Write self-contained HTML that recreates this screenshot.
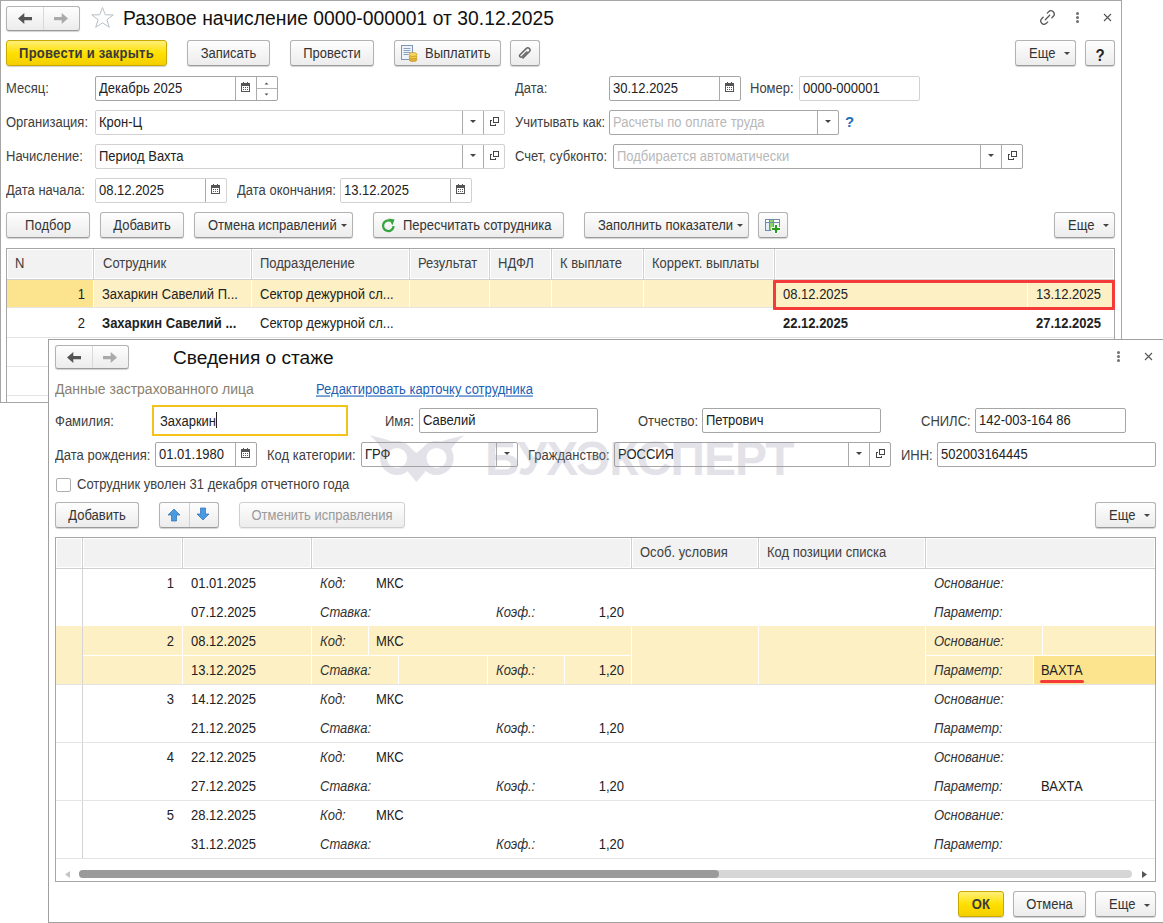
<!DOCTYPE html><html><head><meta charset="utf-8"><style>
*{margin:0;padding:0;box-sizing:border-box}
html,body{width:1163px;height:923px;overflow:hidden;background:#fff;font-family:"Liberation Sans",sans-serif;font-size:13px;color:#404040}
div,span,svg{position:absolute}
.t{white-space:nowrap;line-height:16px;transform:scaleY(1.1);margin-top:1px}
.btn span,.ybtn span{transform:scaleY(1.1)}
.btn,.ybtn{border:1px solid #b3b3b3;border-bottom-color:#9a9a9a;border-radius:3px;background:linear-gradient(#fefefe,#ececec);box-shadow:0 1px 1px rgba(0,0,0,.18);display:flex;align-items:center;justify-content:center;color:#333}
.btn span,.ybtn span{position:static;white-space:nowrap}
.ybtn{background:linear-gradient(#fff07a,#ffe000 50%,#f3cf00);border-color:#c9a800;color:#3a3a3a;font-weight:bold;letter-spacing:.25px}
.fld{border:1px solid #a6a6a6;border-radius:2px;background:#fff}
.ph{color:#b8b8b8}
.hdr{background:#f2f2f2}
</style></head><body><div class="" style="left:0px;top:0px;width:1122px;height:403px;border:1px solid #a6a6a6;background:#fff"></div>
<div class="btn" style="left:6px;top:6px;width:74px;height:25px;"></div>
<div class="" style="left:43px;top:7px;width:1px;height:23px;background:#d9d9d9"></div>
<svg style="left:18px;top:13px" width="14" height="11" viewBox="0 0 14 11"><path d="M0 5.5 L6.3 0 V4 H14 V7.2 H6.3 V11 Z" fill="#555"/></svg>
<svg style="left:54px;top:13px" width="14" height="11" viewBox="0 0 14 11"><path d="M14 5.5 L7.7 0 V4 H0 V7.2 H7.7 V11 Z" fill="#aaa"/></svg>
<svg style="left:90px;top:6px" width="25" height="23" viewBox="0 0 25 23"><path d="M12.5 1.5 L15.3 8.8 L23.2 8.9 L16.9 13.7 L19.3 21.3 L12.5 16.8 L5.7 21.3 L8.1 13.7 L1.8 8.9 L9.7 8.8 Z" fill="none" stroke="#b8bfc6" stroke-width="1"/></svg>
<div class="t" style="left:123px;top:8px;font-size:19.3px;line-height:20px;color:#111;transform:none;letter-spacing:.03px">Разовое начисление 0000-000001 от 30.12.2025</div>
<svg style="left:1040px;top:10px" width="15" height="15" viewBox="0 0 15 15"><g fill="none" stroke="#555" stroke-width="1.3" stroke-linecap="round"><path d="M3.1 7.3 L1.67 8.67 A3.3 3.3 0 0 0 6.33 13.33 L7.7 11.9"/><path d="M11.9 7.7 L13.33 6.33 A3.3 3.3 0 0 0 8.67 1.67 L7.3 3.1"/><path d="M5.3 9.7 L9.7 5.3"/></g></svg>
<div class="" style="left:1076px;top:12px;width:3px;height:3px;background:#707070;border-radius:50%"></div>
<div class="" style="left:1076px;top:16px;width:3px;height:3px;background:#707070;border-radius:50%"></div>
<div class="" style="left:1076px;top:20px;width:3px;height:3px;background:#707070;border-radius:50%"></div>
<svg style="left:1103px;top:13px" width="9" height="9" viewBox="0 0 9 9"><path d="M1 1 L8 8 M8 1 L1 8" stroke="#555" stroke-width="1.1"/></svg>
<div class="ybtn" style="left:6px;top:40px;width:161px;height:26px;"><span>Провести и закрыть</span></div>
<div class="btn" style="left:187px;top:40px;width:83px;height:26px;"><span>Записать</span></div>
<div class="btn" style="left:290px;top:40px;width:84px;height:26px;"><span>Провести</span></div>
<div class="btn" style="left:394px;top:40px;width:107px;height:26px;justify-content:flex-start;padding-left:30px"><span>Выплатить</span></div>
<svg style="left:401px;top:45px" width="17" height="17" viewBox="0 0 17 17"><rect x="0.5" y="0.5" width="11" height="14" fill="#eef3fa" stroke="#7d96b8"/><path d="M2.5 3.5h7M2.5 5.5h7M2.5 7.5h7M2.5 9.5h5" stroke="#8aa0c0"/><ellipse cx="12" cy="14.5" rx="4" ry="2" fill="#e3b53a" stroke="#b88a10" stroke-width=".6"/><ellipse cx="12" cy="12" rx="4" ry="2" fill="#f1c84a" stroke="#b88a10" stroke-width=".6"/><ellipse cx="12" cy="9.5" rx="4" ry="2" fill="#f7d763" stroke="#b88a10" stroke-width=".6"/></svg>
<div class="btn" style="left:510px;top:40px;width:30px;height:26px;"><span></span></div>
<svg style="left:518px;top:46px" width="14" height="14" viewBox="0 0 14 14"><path d="M4.5 12.5 L11.5 5.5 a2.2 2.2 0 0 0 -3.1 -3.1 L2 8.8 a1.4 1.4 0 0 0 2 2 L9.3 5.5" fill="none" stroke="#666" stroke-width="1.5"/></svg>
<div class="btn" style="left:1015px;top:40px;width:61px;height:26px;justify-content:flex-start;padding-left:13px"><span>Еще</span></div>
<svg style="left:1064px;top:52px" width="6" height="4" viewBox="0 0 6 4"><path d="M0 0H6L3 3Z" fill="#444"/></svg>
<div class="btn" style="left:1085px;top:40px;width:30px;height:26px;font-weight:bold;font-size:15px;color:#222;padding-top:2px"><span>?</span></div>
<div class="t" style="left:6px;top:80px;">Месяц:</div>
<div class="fld" style="left:95px;top:76px;width:183px;height:25px;"></div>
<svg style="left:264px;top:82px" width="5" height="3" viewBox="0 0 5 3"><path d="M0.5 2.5H4.5L2.5 0.5Z" fill="#555"/></svg>
<svg style="left:264px;top:93px" width="5" height="3" viewBox="0 0 5 3"><path d="M0.5 0.5H4.5L2.5 2.5Z" fill="#555"/></svg>
<div class="" style="left:256px;top:88px;width:21px;height:1px;background:#b4b4b4"></div>
<div class="" style="left:256px;top:77px;width:1px;height:23px;background:#aaaaaa"></div>
<svg style="left:241px;top:82px" width="9" height="10" viewBox="0 0 9 10" shape-rendering="crispEdges"><g fill="#555"><rect x="0" y="1" width="9" height="3"/><rect x="0" y="1" width="1" height="9"/><rect x="8" y="1" width="1" height="9"/><rect x="0" y="9" width="9" height="1"/><rect x="2" y="0" width="1" height="1"/><rect x="6" y="0" width="1" height="1"/><rect x="2" y="5" width="1" height="1"/><rect x="4" y="5" width="1" height="1"/><rect x="6" y="5" width="1" height="1"/><rect x="2" y="7" width="1" height="1"/><rect x="4" y="7" width="1" height="1"/><rect x="6" y="7" width="1" height="1"/></g></svg>
<div class="" style="left:235px;top:77px;width:1px;height:23px;background:#aaaaaa"></div>
<div class="t" style="left:99px;top:80px;color:#222;">Декабрь 2025</div>
<div class="t" style="left:515px;top:80px;">Дата:</div>
<div class="fld" style="left:609px;top:76px;width:132px;height:25px;"></div>
<svg style="left:725px;top:82px" width="9" height="10" viewBox="0 0 9 10" shape-rendering="crispEdges"><g fill="#555"><rect x="0" y="1" width="9" height="3"/><rect x="0" y="1" width="1" height="9"/><rect x="8" y="1" width="1" height="9"/><rect x="0" y="9" width="9" height="1"/><rect x="2" y="0" width="1" height="1"/><rect x="6" y="0" width="1" height="1"/><rect x="2" y="5" width="1" height="1"/><rect x="4" y="5" width="1" height="1"/><rect x="6" y="5" width="1" height="1"/><rect x="2" y="7" width="1" height="1"/><rect x="4" y="7" width="1" height="1"/><rect x="6" y="7" width="1" height="1"/></g></svg>
<div class="" style="left:719px;top:77px;width:1px;height:23px;background:#aaaaaa"></div>
<div class="t" style="left:613px;top:80px;color:#222;">30.12.2025</div>
<div class="t" style="left:750px;top:80px;">Номер:</div>
<div class="fld" style="left:799px;top:76px;width:121px;height:25px;border-color:#d2d2d2"></div>
<div class="t" style="left:803px;top:80px;color:#222;">0000-000001</div>
<div class="t" style="left:6px;top:114px;">Организация:</div>
<div class="fld" style="left:95px;top:110px;width:410px;height:25px;border-color:#d2d2d2"></div>
<svg style="left:490px;top:117px" width="10" height="10" viewBox="0 0 10 10" shape-rendering="crispEdges"><g fill="#444"><rect x="3" y="0" width="6" height="1"/><rect x="3" y="5" width="6" height="1"/><rect x="3" y="0" width="1" height="6"/><rect x="8" y="0" width="1" height="6"/><rect x="0" y="3" width="1" height="6"/><rect x="0" y="8" width="6" height="1"/><rect x="5" y="7" width="1" height="1"/><rect x="0" y="3" width="2" height="1"/></g></svg>
<div class="" style="left:483px;top:111px;width:1px;height:23px;background:#aaaaaa"></div>
<svg style="left:470px;top:120px" width="6" height="4" viewBox="0 0 6 4"><path d="M0 0H6L3 3Z" fill="#444"/></svg>
<div class="" style="left:462px;top:111px;width:1px;height:23px;background:#aaaaaa"></div>
<div class="t" style="left:99px;top:114px;color:#222;">Крон-Ц</div>
<div class="t" style="left:515px;top:114px;">Учитывать как:</div>
<div class="fld" style="left:609px;top:110px;width:230px;height:25px;"></div>
<svg style="left:825px;top:120px" width="6" height="4" viewBox="0 0 6 4"><path d="M0 0H6L3 3Z" fill="#444"/></svg>
<div class="" style="left:817px;top:111px;width:1px;height:23px;background:#aaaaaa"></div>
<div class="t ph" style="left:613px;top:114px;">Расчеты по оплате труда</div>
<div class="t" style="left:845px;top:113px;color:#1e70b8;font-size:15px;font-weight:bold;transform:none">?</div>
<div class="t" style="left:6px;top:148px;">Начисление:</div>
<div class="fld" style="left:95px;top:144px;width:410px;height:25px;border-color:#d2d2d2"></div>
<svg style="left:490px;top:151px" width="10" height="10" viewBox="0 0 10 10" shape-rendering="crispEdges"><g fill="#444"><rect x="3" y="0" width="6" height="1"/><rect x="3" y="5" width="6" height="1"/><rect x="3" y="0" width="1" height="6"/><rect x="8" y="0" width="1" height="6"/><rect x="0" y="3" width="1" height="6"/><rect x="0" y="8" width="6" height="1"/><rect x="5" y="7" width="1" height="1"/><rect x="0" y="3" width="2" height="1"/></g></svg>
<div class="" style="left:483px;top:145px;width:1px;height:23px;background:#aaaaaa"></div>
<svg style="left:470px;top:154px" width="6" height="4" viewBox="0 0 6 4"><path d="M0 0H6L3 3Z" fill="#444"/></svg>
<div class="" style="left:462px;top:145px;width:1px;height:23px;background:#aaaaaa"></div>
<div class="t" style="left:99px;top:148px;color:#222;">Период Вахта</div>
<div class="t" style="left:515px;top:148px;">Счет, субконто:</div>
<div class="fld" style="left:613px;top:144px;width:410px;height:25px;"></div>
<svg style="left:1008px;top:151px" width="10" height="10" viewBox="0 0 10 10" shape-rendering="crispEdges"><g fill="#444"><rect x="3" y="0" width="6" height="1"/><rect x="3" y="5" width="6" height="1"/><rect x="3" y="0" width="1" height="6"/><rect x="8" y="0" width="1" height="6"/><rect x="0" y="3" width="1" height="6"/><rect x="0" y="8" width="6" height="1"/><rect x="5" y="7" width="1" height="1"/><rect x="0" y="3" width="2" height="1"/></g></svg>
<div class="" style="left:1001px;top:145px;width:1px;height:23px;background:#aaaaaa"></div>
<svg style="left:988px;top:154px" width="6" height="4" viewBox="0 0 6 4"><path d="M0 0H6L3 3Z" fill="#444"/></svg>
<div class="" style="left:980px;top:145px;width:1px;height:23px;background:#aaaaaa"></div>
<div class="t ph" style="left:617px;top:148px;">Подбирается автоматически</div>
<div class="t" style="left:6px;top:182px;">Дата начала:</div>
<div class="fld" style="left:95px;top:178px;width:132px;height:25px;border-color:#d2d2d2"></div>
<svg style="left:211px;top:184px" width="9" height="10" viewBox="0 0 9 10" shape-rendering="crispEdges"><g fill="#555"><rect x="0" y="1" width="9" height="3"/><rect x="0" y="1" width="1" height="9"/><rect x="8" y="1" width="1" height="9"/><rect x="0" y="9" width="9" height="1"/><rect x="2" y="0" width="1" height="1"/><rect x="6" y="0" width="1" height="1"/><rect x="2" y="5" width="1" height="1"/><rect x="4" y="5" width="1" height="1"/><rect x="6" y="5" width="1" height="1"/><rect x="2" y="7" width="1" height="1"/><rect x="4" y="7" width="1" height="1"/><rect x="6" y="7" width="1" height="1"/></g></svg>
<div class="" style="left:205px;top:179px;width:1px;height:23px;background:#aaaaaa"></div>
<div class="t" style="left:99px;top:182px;color:#222;">08.12.2025</div>
<div class="t" style="left:237px;top:182px;">Дата окончания:</div>
<div class="fld" style="left:340px;top:178px;width:132px;height:25px;border-color:#d2d2d2"></div>
<svg style="left:456px;top:184px" width="9" height="10" viewBox="0 0 9 10" shape-rendering="crispEdges"><g fill="#555"><rect x="0" y="1" width="9" height="3"/><rect x="0" y="1" width="1" height="9"/><rect x="8" y="1" width="1" height="9"/><rect x="0" y="9" width="9" height="1"/><rect x="2" y="0" width="1" height="1"/><rect x="6" y="0" width="1" height="1"/><rect x="2" y="5" width="1" height="1"/><rect x="4" y="5" width="1" height="1"/><rect x="6" y="5" width="1" height="1"/><rect x="2" y="7" width="1" height="1"/><rect x="4" y="7" width="1" height="1"/><rect x="6" y="7" width="1" height="1"/></g></svg>
<div class="" style="left:450px;top:179px;width:1px;height:23px;background:#aaaaaa"></div>
<div class="t" style="left:344px;top:182px;color:#222;">13.12.2025</div>
<div class="btn" style="left:6px;top:212px;width:84px;height:26px;"><span>Подбор</span></div>
<div class="btn" style="left:100px;top:212px;width:84px;height:26px;"><span>Добавить</span></div>
<div class="btn" style="left:194px;top:212px;width:159px;height:26px;justify-content:flex-start;padding-left:13px"><span>Отмена исправлений</span></div>
<svg style="left:341px;top:224px" width="6" height="4" viewBox="0 0 6 4"><path d="M0 0H6L3 3Z" fill="#444"/></svg>
<div class="btn" style="left:373px;top:212px;width:191px;height:26px;justify-content:flex-start;padding-left:29px"><span>Пересчитать сотрудника</span></div>
<svg style="left:381px;top:218px" width="15" height="15" viewBox="0 0 15 15"><path d="M12.6 8.2 A5.3 5.3 0 1 1 9.6 3" fill="none" stroke="#37a53f" stroke-width="2.3"/><path d="M7.6 0.6 L13.6 1.6 L11.4 7.2 Z" fill="#37a53f"/></svg>
<div class="btn" style="left:584px;top:212px;width:165px;height:26px;justify-content:flex-start;padding-left:13px"><span>Заполнить показатели</span></div>
<svg style="left:737px;top:224px" width="6" height="4" viewBox="0 0 6 4"><path d="M0 0H6L3 3Z" fill="#444"/></svg>
<div class="btn" style="left:758px;top:212px;width:30px;height:26px;"><span></span></div>
<svg style="left:765px;top:219px" width="18" height="15" viewBox="0 0 18 15" shape-rendering="crispEdges"><rect x="0" y="0" width="15" height="12" fill="#6f8da8"/><rect x="1" y="1" width="3" height="2" fill="#fff"/><rect x="5" y="1" width="3" height="2" fill="#8bd36a"/><rect x="9" y="1" width="5" height="2" fill="#fff"/><rect x="1" y="4" width="3" height="7" fill="#e3edf7"/><rect x="5" y="4" width="3" height="7" fill="#8bd36a"/><rect x="9" y="4" width="5" height="7" fill="#eef4fa"/><path d="M9.5 5.5h3v3h3v3h-3v3h-3v-3h-3v-3h3z" fill="#2a9a1c" stroke="#fff" stroke-width="1" shape-rendering="geometricPrecision"/></svg>
<div class="btn" style="left:1054px;top:212px;width:61px;height:26px;justify-content:flex-start;padding-left:13px"><span>Еще</span></div>
<svg style="left:1103px;top:224px" width="6" height="4" viewBox="0 0 6 4"><path d="M0 0H6L3 3Z" fill="#444"/></svg>
<div class="" style="left:6px;top:248px;width:1109px;height:155px;border:1px solid #a6a6a6;border-bottom:none;background:#fff"></div>
<div class="hdr" style="left:8px;top:250px;width:84px;height:28px;"></div>
<div class="hdr" style="left:95px;top:250px;width:155px;height:28px;"></div>
<div class="hdr" style="left:253px;top:250px;width:155px;height:28px;"></div>
<div class="hdr" style="left:411px;top:250px;width:77px;height:28px;"></div>
<div class="hdr" style="left:491px;top:250px;width:59px;height:28px;"></div>
<div class="hdr" style="left:553px;top:250px;width:89px;height:28px;"></div>
<div class="hdr" style="left:645px;top:250px;width:128px;height:28px;"></div>
<div class="hdr" style="left:776px;top:250px;width:337px;height:28px;"></div>
<div class="" style="left:93px;top:249px;width:1px;height:30px;background:#d0d0d0"></div>
<div class="" style="left:251px;top:249px;width:1px;height:30px;background:#d0d0d0"></div>
<div class="" style="left:409px;top:249px;width:1px;height:30px;background:#d0d0d0"></div>
<div class="" style="left:489px;top:249px;width:1px;height:30px;background:#d0d0d0"></div>
<div class="" style="left:551px;top:249px;width:1px;height:30px;background:#d0d0d0"></div>
<div class="" style="left:643px;top:249px;width:1px;height:30px;background:#d0d0d0"></div>
<div class="" style="left:774px;top:249px;width:1px;height:30px;background:#d0d0d0"></div>
<div class="" style="left:7px;top:279px;width:1107px;height:1px;background:#d0d0d0"></div>
<div class="t" style="left:15px;top:255px;">N</div>
<div class="t" style="left:103px;top:255px;">Сотрудник</div>
<div class="t" style="left:260px;top:255px;">Подразделение</div>
<div class="t" style="left:418px;top:255px;">Результат</div>
<div class="t" style="left:498px;top:255px;">НДФЛ</div>
<div class="t" style="left:560px;top:255px;">К выплате</div>
<div class="t" style="left:652px;top:255px;">Коррект. выплаты</div>
<div class="" style="left:7px;top:280px;width:1107px;height:27px;background:#fdf0c4"></div>
<div class="" style="left:7px;top:280px;width:86px;height:27px;background:#fce38e"></div>
<div class="" style="left:93px;top:280px;width:1px;height:27px;background:#fff"></div>
<div class="" style="left:251px;top:280px;width:1px;height:27px;background:#fff"></div>
<div class="" style="left:409px;top:280px;width:1px;height:27px;background:#fff"></div>
<div class="" style="left:489px;top:280px;width:1px;height:27px;background:#fff"></div>
<div class="" style="left:551px;top:280px;width:1px;height:27px;background:#fff"></div>
<div class="" style="left:643px;top:280px;width:1px;height:27px;background:#fff"></div>
<div class="" style="left:774px;top:280px;width:1px;height:27px;background:#fff"></div>
<div class="" style="left:1027px;top:280px;width:1px;height:27px;background:#fff"></div>
<div class="" style="left:7px;top:307px;width:1107px;height:1px;background:#e4e4e4"></div>
<div class="t" style="right:1078px;top:286px;color:#222">1</div>
<div class="t" style="left:102px;top:286px;color:#222">Захаркин Савелий П...</div>
<div class="t" style="left:260px;top:286px;color:#222">Сектор дежурной сл...</div>
<div class="t" style="left:783px;top:286px;color:#222">08.12.2025</div>
<div class="t" style="right:62px;top:286px;color:#222">13.12.2025</div>
<div class="" style="left:773px;top:280px;width:342px;height:30px;border:3px solid #f53a3a;border-radius:1px"></div>
<div class="t" style="right:1078px;top:315px;color:#222">2</div>
<div class="t" style="left:102px;top:315px;color:#222;font-weight:bold">Захаркин Савелий ...</div>
<div class="t" style="left:260px;top:315px;color:#222">Сектор дежурной сл...</div>
<div class="t" style="left:783px;top:315px;color:#222;font-weight:bold">22.12.2025</div>
<div class="t" style="right:62px;top:315px;color:#222;font-weight:bold">27.12.2025</div>
<div class="" style="left:7px;top:337px;width:1107px;height:1px;background:#e4e4e4"></div>
<div class="" style="left:7px;top:366px;width:1107px;height:1px;background:#e4e4e4"></div>
<div class="" style="left:7px;top:395px;width:1107px;height:1px;background:#e4e4e4"></div>
<div class="" style="left:0px;top:402px;width:1122px;height:1px;background:#a6a6a6"></div>
<div class="" style="left:48px;top:339px;width:1120px;height:584px;border:1px solid #a0a0a0;border-right:none;background:#fff"></div>
<div class="btn" style="left:55px;top:345px;width:74px;height:24px;"></div>
<div class="" style="left:92px;top:346px;width:1px;height:22px;background:#d9d9d9"></div>
<svg style="left:67px;top:352px" width="14" height="11" viewBox="0 0 14 11"><path d="M0 5.5 L6.3 0 V4 H14 V7.2 H6.3 V11 Z" fill="#555"/></svg>
<svg style="left:103px;top:352px" width="14" height="11" viewBox="0 0 14 11"><path d="M14 5.5 L7.7 0 V4 H0 V7.2 H7.7 V11 Z" fill="#aaa"/></svg>
<div class="t" style="left:173px;top:347px;font-size:19.1px;line-height:20px;color:#111;transform:none">Сведения о стаже</div>
<div class="" style="left:1117px;top:351px;width:3px;height:3px;background:#707070;border-radius:50%"></div>
<div class="" style="left:1117px;top:355px;width:3px;height:3px;background:#707070;border-radius:50%"></div>
<div class="" style="left:1117px;top:359px;width:3px;height:3px;background:#707070;border-radius:50%"></div>
<svg style="left:1144px;top:352px" width="9" height="9" viewBox="0 0 9 9"><path d="M1 1 L8 8 M8 1 L1 8" stroke="#555" stroke-width="1.1"/></svg>
<div class="t" style="left:55px;top:379px;color:#8b7f6e;font-size:14px">Данные застрахованного лица</div>
<div class="t" style="left:316px;top:381px;color:#1b5fb5;text-decoration:underline">Редактировать карточку сотрудника</div>
<div class="t" style="left:55px;top:413px;">Фамилия:</div>
<div class="" style="left:152px;top:405px;width:196px;height:31px;border:2px solid #f3c31b;background:#fff"></div>
<div class="t" style="left:160px;top:413px;color:#222">Захаркин</div>
<div class="" style="left:216px;top:412px;width:1px;height:16px;background:#222"></div>
<div class="t" style="left:385px;top:413px;">Имя:</div>
<div class="fld" style="left:419px;top:408px;width:179px;height:25px;"></div>
<div class="t" style="left:423px;top:412px;color:#222;">Савелий</div>
<div class="t" style="left:638px;top:413px;">Отчество:</div>
<div class="fld" style="left:702px;top:408px;width:179px;height:25px;"></div>
<div class="t" style="left:706px;top:412px;color:#222;">Петрович</div>
<div class="t" style="left:921px;top:413px;">СНИЛС:</div>
<div class="fld" style="left:975px;top:408px;width:151px;height:25px;"></div>
<div class="t" style="left:979px;top:412px;color:#222;">142-003-164 86</div>
<div class="t" style="left:55px;top:447px;">Дата рождения:</div>
<div class="fld" style="left:155px;top:442px;width:102px;height:25px;"></div>
<svg style="left:241px;top:448px" width="9" height="10" viewBox="0 0 9 10" shape-rendering="crispEdges"><g fill="#555"><rect x="0" y="1" width="9" height="3"/><rect x="0" y="1" width="1" height="9"/><rect x="8" y="1" width="1" height="9"/><rect x="0" y="9" width="9" height="1"/><rect x="2" y="0" width="1" height="1"/><rect x="6" y="0" width="1" height="1"/><rect x="2" y="5" width="1" height="1"/><rect x="4" y="5" width="1" height="1"/><rect x="6" y="5" width="1" height="1"/><rect x="2" y="7" width="1" height="1"/><rect x="4" y="7" width="1" height="1"/><rect x="6" y="7" width="1" height="1"/></g></svg>
<div class="" style="left:235px;top:443px;width:1px;height:23px;background:#aaaaaa"></div>
<div class="t" style="left:159px;top:446px;color:#222;">01.01.1980</div>
<div class="t" style="left:267px;top:447px;">Код категории:</div>
<div class="fld" style="left:361px;top:442px;width:157px;height:25px;"></div>
<svg style="left:504px;top:452px" width="6" height="4" viewBox="0 0 6 4"><path d="M0 0H6L3 3Z" fill="#444"/></svg>
<div class="" style="left:496px;top:443px;width:1px;height:23px;background:#aaaaaa"></div>
<div class="t" style="left:365px;top:446px;color:#222;">ГРФ</div>
<div class="t" style="left:528px;top:447px;">Гражданство:</div>
<div class="fld" style="left:614px;top:442px;width:277px;height:25px;"></div>
<svg style="left:876px;top:449px" width="10" height="10" viewBox="0 0 10 10" shape-rendering="crispEdges"><g fill="#444"><rect x="3" y="0" width="6" height="1"/><rect x="3" y="5" width="6" height="1"/><rect x="3" y="0" width="1" height="6"/><rect x="8" y="0" width="1" height="6"/><rect x="0" y="3" width="1" height="6"/><rect x="0" y="8" width="6" height="1"/><rect x="5" y="7" width="1" height="1"/><rect x="0" y="3" width="2" height="1"/></g></svg>
<div class="" style="left:869px;top:443px;width:1px;height:23px;background:#aaaaaa"></div>
<svg style="left:856px;top:452px" width="6" height="4" viewBox="0 0 6 4"><path d="M0 0H6L3 3Z" fill="#444"/></svg>
<div class="" style="left:848px;top:443px;width:1px;height:23px;background:#aaaaaa"></div>
<div class="t" style="left:618px;top:446px;color:#222;">РОССИЯ</div>
<div class="t" style="left:901px;top:447px;">ИНН:</div>
<div class="fld" style="left:937px;top:442px;width:219px;height:25px;"></div>
<div class="t" style="left:941px;top:446px;color:#222;">502003164445</div>
<div class="" style="left:56px;top:478px;width:15px;height:14px;border:1px solid #b0b0b0;border-radius:2px;background:#fff"></div>
<div class="t" style="left:77px;top:476px;">Сотрудник уволен 31 декабря отчетного года</div>
<div class="btn" style="left:55px;top:502px;width:84px;height:26px;"><span>Добавить</span></div>
<div class="btn" style="left:159px;top:502px;width:60px;height:26px;"><span></span></div>
<div class="" style="left:189px;top:503px;width:1px;height:24px;background:#d0d0d0"></div>
<svg style="left:167px;top:508px" width="14" height="14" viewBox="0 0 14 14"><path d="M7 1 L13 7 H9.5 V13 H4.5 V7 H1 Z" fill="#4a9ae0" stroke="#2a6fb5" stroke-width=".7"/></svg>
<svg style="left:196px;top:507px" width="14" height="14" viewBox="0 0 14 14"><path d="M7 13 L13 7 H9.5 V1 H4.5 V7 H1 Z" fill="#4a9ae0" stroke="#2a6fb5" stroke-width=".7"/></svg>
<div class="btn" style="left:239px;top:502px;width:166px;height:26px;color:#9a9a9a;box-shadow:0 1px 1px rgba(0,0,0,.08);border-color:#cfcfcf"><span>Отменить исправления</span></div>
<div class="btn" style="left:1095px;top:502px;width:61px;height:26px;justify-content:flex-start;padding-left:13px"><span>Еще</span></div>
<svg style="left:1144px;top:514px" width="6" height="4" viewBox="0 0 6 4"><path d="M0 0H6L3 3Z" fill="#444"/></svg>
<div class="" style="left:55px;top:537px;width:1101px;height:345px;border:1px solid #a6a6a6;background:#fff"></div>
<div class="hdr" style="left:57px;top:539px;width:24px;height:28px;"></div>
<div class="hdr" style="left:84px;top:539px;width:97px;height:28px;"></div>
<div class="hdr" style="left:184px;top:539px;width:126px;height:28px;"></div>
<div class="hdr" style="left:313px;top:539px;width:317px;height:28px;"></div>
<div class="hdr" style="left:633px;top:539px;width:124px;height:28px;"></div>
<div class="hdr" style="left:760px;top:539px;width:164px;height:28px;"></div>
<div class="hdr" style="left:927px;top:539px;width:227px;height:28px;"></div>
<div class="" style="left:82px;top:538px;width:1px;height:30px;background:#d0d0d0"></div>
<div class="" style="left:182px;top:538px;width:1px;height:30px;background:#d0d0d0"></div>
<div class="" style="left:311px;top:538px;width:1px;height:30px;background:#d0d0d0"></div>
<div class="" style="left:631px;top:538px;width:1px;height:30px;background:#d0d0d0"></div>
<div class="" style="left:758px;top:538px;width:1px;height:30px;background:#d0d0d0"></div>
<div class="" style="left:925px;top:538px;width:1px;height:30px;background:#d0d0d0"></div>
<div class="" style="left:56px;top:568px;width:1099px;height:1px;background:#d0d0d0"></div>
<div class="t" style="left:640px;top:544px;">Особ. условия</div>
<div class="t" style="left:767px;top:544px;">Код позиции списка</div>
<div class="" style="left:82px;top:569px;width:1px;height:290px;background:#d4d4d4"></div>
<div class="" style="left:56px;top:626px;width:1099px;height:1px;background:#e4e4e4"></div>
<div class="t" style="right:989px;top:575px;color:#222">1</div>
<div class="t" style="left:191px;top:575px;color:#222">01.01.2025</div>
<div class="t" style="left:191px;top:604px;color:#222">07.12.2025</div>
<div class="t" style="left:320px;top:575px;color:#333;font-style:italic">Код:</div>
<div class="t" style="left:376px;top:575px;color:#222">МКС</div>
<div class="t" style="left:320px;top:604px;color:#333;font-style:italic">Ставка:</div>
<div class="t" style="left:496px;top:604px;color:#333;font-style:italic">Коэф.:</div>
<div class="t" style="right:539px;top:604px;color:#222">1,20</div>
<div class="t" style="left:934px;top:575px;color:#333;font-style:italic">Основание:</div>
<div class="t" style="left:934px;top:604px;color:#333;font-style:italic">Параметр:</div>
<div class="" style="left:83px;top:626px;width:1072px;height:58px;background:#fdf0c4"></div>
<div class="" style="left:56px;top:626px;width:26px;height:58px;background:#fdf0c4"></div>
<div class="" style="left:83px;top:655px;width:548px;height:1px;background:#fff"></div>
<div class="" style="left:926px;top:655px;width:229px;height:1px;background:#fff"></div>
<div class="" style="left:182px;top:626px;width:1px;height:58px;background:#fff"></div>
<div class="" style="left:311px;top:626px;width:1px;height:58px;background:#fff"></div>
<div class="" style="left:631px;top:626px;width:1px;height:58px;background:#fff"></div>
<div class="" style="left:758px;top:626px;width:1px;height:58px;background:#fff"></div>
<div class="" style="left:925px;top:626px;width:1px;height:58px;background:#fff"></div>
<div class="" style="left:368px;top:626px;width:1px;height:29px;background:#fff"></div>
<div class="" style="left:1042px;top:626px;width:1px;height:29px;background:#fff"></div>
<div class="" style="left:398px;top:655px;width:1px;height:29px;background:#fff"></div>
<div class="" style="left:487px;top:655px;width:1px;height:29px;background:#fff"></div>
<div class="" style="left:564px;top:655px;width:1px;height:29px;background:#fff"></div>
<div class="" style="left:1033px;top:655px;width:1px;height:29px;background:#fff"></div>
<div class="" style="left:1034px;top:656px;width:121px;height:28px;background:#fce38e"></div>
<div class="" style="left:56px;top:684px;width:1099px;height:1px;background:#e4e4e4"></div>
<div class="t" style="right:989px;top:633px;color:#222">2</div>
<div class="t" style="left:191px;top:633px;color:#222">08.12.2025</div>
<div class="t" style="left:191px;top:662px;color:#222">13.12.2025</div>
<div class="t" style="left:320px;top:633px;color:#333;font-style:italic">Код:</div>
<div class="t" style="left:376px;top:633px;color:#222">МКС</div>
<div class="t" style="left:320px;top:662px;color:#333;font-style:italic">Ставка:</div>
<div class="t" style="left:496px;top:662px;color:#333;font-style:italic">Коэф.:</div>
<div class="t" style="right:539px;top:662px;color:#222">1,20</div>
<div class="t" style="left:934px;top:633px;color:#333;font-style:italic">Основание:</div>
<div class="t" style="left:934px;top:662px;color:#333;font-style:italic">Параметр:</div>
<div class="t" style="left:1041px;top:662px;color:#222">ВАХТА</div>
<div class="" style="left:56px;top:742px;width:1099px;height:1px;background:#e4e4e4"></div>
<div class="t" style="right:989px;top:691px;color:#222">3</div>
<div class="t" style="left:191px;top:691px;color:#222">14.12.2025</div>
<div class="t" style="left:191px;top:720px;color:#222">21.12.2025</div>
<div class="t" style="left:320px;top:691px;color:#333;font-style:italic">Код:</div>
<div class="t" style="left:376px;top:691px;color:#222">МКС</div>
<div class="t" style="left:320px;top:720px;color:#333;font-style:italic">Ставка:</div>
<div class="t" style="left:496px;top:720px;color:#333;font-style:italic">Коэф.:</div>
<div class="t" style="right:539px;top:720px;color:#222">1,20</div>
<div class="t" style="left:934px;top:691px;color:#333;font-style:italic">Основание:</div>
<div class="t" style="left:934px;top:720px;color:#333;font-style:italic">Параметр:</div>
<div class="" style="left:56px;top:800px;width:1099px;height:1px;background:#e4e4e4"></div>
<div class="t" style="right:989px;top:749px;color:#222">4</div>
<div class="t" style="left:191px;top:749px;color:#222">22.12.2025</div>
<div class="t" style="left:191px;top:778px;color:#222">27.12.2025</div>
<div class="t" style="left:320px;top:749px;color:#333;font-style:italic">Код:</div>
<div class="t" style="left:376px;top:749px;color:#222">МКС</div>
<div class="t" style="left:320px;top:778px;color:#333;font-style:italic">Ставка:</div>
<div class="t" style="left:496px;top:778px;color:#333;font-style:italic">Коэф.:</div>
<div class="t" style="right:539px;top:778px;color:#222">1,20</div>
<div class="t" style="left:934px;top:749px;color:#333;font-style:italic">Основание:</div>
<div class="t" style="left:934px;top:778px;color:#333;font-style:italic">Параметр:</div>
<div class="t" style="left:1041px;top:778px;color:#222">ВАХТА</div>
<div class="" style="left:56px;top:858px;width:1099px;height:1px;background:#e4e4e4"></div>
<div class="t" style="right:989px;top:807px;color:#222">5</div>
<div class="t" style="left:191px;top:807px;color:#222">28.12.2025</div>
<div class="t" style="left:191px;top:836px;color:#222">31.12.2025</div>
<div class="t" style="left:320px;top:807px;color:#333;font-style:italic">Код:</div>
<div class="t" style="left:376px;top:807px;color:#222">МКС</div>
<div class="t" style="left:320px;top:836px;color:#333;font-style:italic">Ставка:</div>
<div class="t" style="left:496px;top:836px;color:#333;font-style:italic">Коэф.:</div>
<div class="t" style="right:539px;top:836px;color:#222">1,20</div>
<div class="t" style="left:934px;top:807px;color:#333;font-style:italic">Основание:</div>
<div class="t" style="left:934px;top:836px;color:#333;font-style:italic">Параметр:</div>
<div class="" style="left:1040px;top:680px;width:44px;height:3px;background:#f53a3a;border-radius:2px"></div>
<svg style="left:65px;top:871px" width="5" height="7" viewBox="0 0 5 7"><path d="M5 0V7L0 3.5Z" fill="#c4c4c4"/></svg>
<div class="" style="left:79px;top:870px;width:1053px;height:8px;background:#d6d6d6;border-radius:4px"></div>
<div class="" style="left:79px;top:870px;width:640px;height:8px;background:#9a9a9a;border-radius:4px"></div>
<svg style="left:1142px;top:871px" width="5" height="7" viewBox="0 0 5 7"><path d="M0 0V7L5 3.5Z" fill="#555"/></svg>
<div class="ybtn" style="left:958px;top:891px;width:46px;height:26px;"><span>ОК</span></div>
<div class="btn" style="left:1013px;top:891px;width:73px;height:26px;"><span>Отмена</span></div>
<div class="btn" style="left:1095px;top:891px;width:61px;height:26px;justify-content:flex-start;padding-left:13px"><span>Еще</span></div>
<svg style="left:1144px;top:904px" width="6" height="4" viewBox="0 0 6 4"><path d="M0 0H6L3 3Z" fill="#444"/></svg>
<svg style="left:362px;top:430px;opacity:.26" width="110" height="56" viewBox="0 0 110 56"><g fill="#9494a8"><circle cx="35" cy="28" r="13.6" fill="none" stroke="#9494a8" stroke-width="7"/><circle cx="74.5" cy="28" r="13.6" fill="none" stroke="#9494a8" stroke-width="7"/><path d="M7.6 5.2 Q25 9 40 14.5 L22 22 Q16 12 7.6 5.2 Z"/><path d="M102.2 5.2 Q85 9 69.5 14.5 L87.5 22 Q93 12 102.2 5.2 Z"/><path d="M46 16 L54.4 23 L63 16 L63 42 L54.4 52 L46 42 Z"/></g></svg>
<div class="t" style="left:485px;top:433px;font-size:48px;line-height:50px;font-weight:bold;transform:none;letter-spacing:-1px;color:#9494a8;opacity:.26">БУХЭКСПЕРТ</div></body></html>
